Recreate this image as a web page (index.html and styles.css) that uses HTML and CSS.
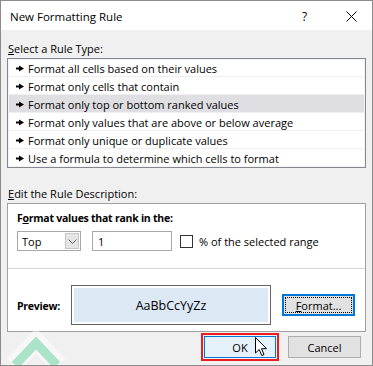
FILE: index.html
```html
<!DOCTYPE html>
<html>
<head>
<meta charset="utf-8">
<link rel="stylesheet" href="styles.css">
</head>
<body>
<div class="window">
  <div class="titlebar">
    <span class="title">New Formatting Rule</span>
    <span class="tb-help">?</span>
    <span class="tb-close"><svg width="11" height="11" viewBox="0 0 11 11"><path d="M0.5 0.5 L10.5 10.5 M10.5 0.5 L0.5 10.5" stroke="#000" stroke-width="1" fill="none"/></svg></span>
  </div>
  <div class="content">
    <div class="label"><u>S</u>elect a Rule Type:</div>
    <ul class="rules">
      <li><svg class="arr" width="8" height="7" viewBox="0 0 8 7"><rect x="0" y="2.5" width="4" height="2" fill="#000"/><polygon points="3,0.5 8,3.5 3,6.5" fill="#000"/></svg>Format all cells based on their values</li>
      <li><svg class="arr" width="8" height="7" viewBox="0 0 8 7"><rect x="0" y="2.5" width="4" height="2" fill="#000"/><polygon points="3,0.5 8,3.5 3,6.5" fill="#000"/></svg>Format only cells that contain</li>
      <li class="sel"><svg class="arr" width="8" height="7" viewBox="0 0 8 7"><rect x="0" y="2.5" width="4" height="2" fill="#000"/><polygon points="3,0.5 8,3.5 3,6.5" fill="#000"/></svg>Format only top or bottom ranked values</li>
      <li><svg class="arr" width="8" height="7" viewBox="0 0 8 7"><rect x="0" y="2.5" width="4" height="2" fill="#000"/><polygon points="3,0.5 8,3.5 3,6.5" fill="#000"/></svg>Format only values that are above or below average</li>
      <li><svg class="arr" width="8" height="7" viewBox="0 0 8 7"><rect x="0" y="2.5" width="4" height="2" fill="#000"/><polygon points="3,0.5 8,3.5 3,6.5" fill="#000"/></svg>Format only unique or duplicate values</li>
      <li><svg class="arr" width="8" height="7" viewBox="0 0 8 7"><rect x="0" y="2.5" width="4" height="2" fill="#000"/><polygon points="3,0.5 8,3.5 3,6.5" fill="#000"/></svg>Use a formula to determine which cells to format</li>
    </ul>
    <div class="label label-edit"><u>E</u>dit the Rule Description:</div>
    <div class="panel">
      <div class="panel-top">
        <div class="bold">F<u>o</u>rmat values that rank in the:</div>
        <div class="controls">
          <div class="combo"><span class="combo-text">Top</span><span class="drop"><svg width="9" height="5" viewBox="0 0 9 5"><path d="M0.5 0.5 L4.5 4.5 L8.5 0.5" stroke="#606060" stroke-width="1" fill="none"/></svg></span></div>
          <div class="input">1</div>
          <div class="check"><span class="box"></span><span>% of the selected ran<u>g</u>e</span></div>
        </div>
      </div>
      <div class="panel-bottom">
        <div class="bold preview-label">Preview:</div>
        <div class="preview"><div class="preview-inner">AaBbCcYyZz</div></div>
        <div class="btn btn-format"><span class="focus"><u>F</u>ormat...</span></div>
      </div>
    </div>
    <div class="footer">
      <div class="ok-ring"><div class="btn btn-ok">OK</div></div>
      <div class="btn btn-cancel">Cancel</div>
    </div>
  </div>
  <svg class="watermark" width="64" height="40" viewBox="0 0 64 40"><polyline points="6,40 29,16 52,40" stroke="#ffffff" stroke-opacity="0.45" stroke-width="18" fill="none"/><polyline points="8,40 29,18 50,40" stroke="#abe3c9" stroke-width="9" fill="none"/></svg>
  <svg class="cursor" width="13" height="20" viewBox="0 0 13 20"><path d="M0.5 0.5 L0.5 16 L4.2 12.5 L6.8 18.5 L9 17.5 L6.5 11.7 L11.5 11.7 Z" fill="#fff" stroke="#000" stroke-width="1" stroke-linejoin="miter"/></svg>
</div>
</body>
</html>
```
FILE: styles.css
```css
html, body {
  margin: 0;
  padding: 0;
}
body {
  font-family: "Open Sans", "Noto Sans", sans-serif;
  font-size: 11px;
  color: #000;
}
.window {
  position: relative;
  width: 373px;
  height: 366px;
  box-sizing: border-box;
  border: 1px solid #8c8c8c;
  background: #f0f0f0;
  display: flex;
  flex-direction: column;
  overflow: hidden;
}
.titlebar {
  height: 29px;
  background: #fff;
  display: flex;
  align-items: center;
  padding-left: 9px;
  padding-top: 2px;
  box-sizing: border-box;
  flex: none;
}
.title {
  font-size: 11.5px;
  flex: 1;
}
.tb-help {
  font-size: 12px;
  width: 44px;
  text-align: left;
}
.tb-close {
  width: 26px;
  display: flex;
  align-items: center;
}
.content {
  flex: 1;
  padding: 0 6px;
  display: flex;
  flex-direction: column;
}
.label {
  line-height: 16px;
  margin-top: 11px;
  margin-bottom: -1px;
  padding-left: 1px;
}
.label-edit {
  margin-top: 18px;
}
.rules {
  list-style: none;
  margin: 2px 0 0 0;
  padding: 0;
  background: #fff;
  border: 1px solid #828790;
  box-shadow: inset 0 0 0 1px #f4f4f4;
}
.rules li {
  height: 18px;
  line-height: 16px;
  padding-top: 2px;
  border-bottom: 1px solid #efefef;
  box-sizing: border-box;
  display: flex;
  align-items: center;
  padding-left: 7px;
  margin: 0 1px;
}
.rules li:last-child {
  border-bottom: none;
}
.rules li.sel {
  background: #dedee3;
}
.arr {
  margin-right: 4px;
  margin-top: -1px;
  flex: none;
}
.panel {
  margin-top: 2px;
  background: #fff;
  border: 1px solid #a0a0a0;
}
.panel-top {
  padding: 6px 9px 17px 9px;
  border-bottom: 1px solid #d4d4d4;
}
.bold {
  font-weight: bold;
  line-height: 16px;
  font-size: 10.5px;
  letter-spacing: -0.25px;
}
.controls {
  margin-top: 5px;
  display: flex;
  align-items: center;
  height: 20px;
}
.combo {
  width: 64px;
  height: 20px;
  box-sizing: border-box;
  border: 1px solid #a8a8a8;
  display: flex;
  align-items: center;
  padding: 1px;
}
.combo-text {
  flex: 1;
  padding-left: 3px;
  padding-top: 1px;
}
.drop {
  width: 14px;
  height: 16px;
  box-sizing: border-box;
  background: #e5e5e5;
  border: 1px solid #c8c8c8;
  display: flex;
  align-items: center;
  justify-content: center;
}
.input {
  margin-left: 11px;
  width: 80px;
  height: 20px;
  box-sizing: border-box;
  border: 1px solid #a8a8a8;
  padding-left: 5px;
  line-height: 19px;
}
.check {
  margin-left: 8px;
  display: flex;
  align-items: center;
}
.check span:last-child {
  padding-top: 1px;
}
.box {
  width: 13px;
  height: 13px;
  box-sizing: border-box;
  border: 1px solid #333;
  background: #fff;
  margin-right: 6px;
}
.panel-bottom {
  display: flex;
  align-items: center;
  padding: 16px 0 6px 9px;
}
.preview-label {
  width: 54px;
  padding-top: 2px;
}
.preview {
  width: 200px;
  height: 40px;
  box-sizing: border-box;
  border: 1px solid #646464;
  padding: 2px;
  background: #fff;
}
.preview-inner {
  height: 100%;
  background: #dce8f4;
  display: flex;
  align-items: center;
  justify-content: center;
  font-size: 12.5px;
  padding-top: 1px;
  box-sizing: border-box;
}
.btn {
  box-sizing: border-box;
  display: flex;
  align-items: center;
  justify-content: center;
}
.btn-format {
  margin-left: 11px;
  width: 73px;
  height: 22px;
  border: 2px solid #0078d7;
  background: #e1e1e1;
  padding: 1px;
}
.focus {
  flex: 1;
  align-self: stretch;
  border: 1px dotted #000;
  display: flex;
  align-items: center;
  justify-content: center;
  padding-top: 1px;
}
.footer {
  margin-top: 1px;
  display: flex;
  justify-content: flex-end;
  align-items: center;
  padding-right: 5px;
}
.ok-ring {
  border: 2px solid #ee1c1c;
  padding: 1px;
}
.btn-ok {
  width: 72px;
  height: 22px;
  border: 1px solid #0078d7;
  background: #e5f1fb;
  padding-top: 1px;
}
.btn-cancel {
  margin-left: 9px;
  width: 73px;
  height: 22px;
  border: 1px solid #adadad;
  background: #e1e1e1;
  padding-top: 1px;
}
.watermark {
  position: absolute;
  left: 6px;
  top: 324px;
}
.cursor {
  position: absolute;
  left: 254px;
  top: 336px;
}
```
